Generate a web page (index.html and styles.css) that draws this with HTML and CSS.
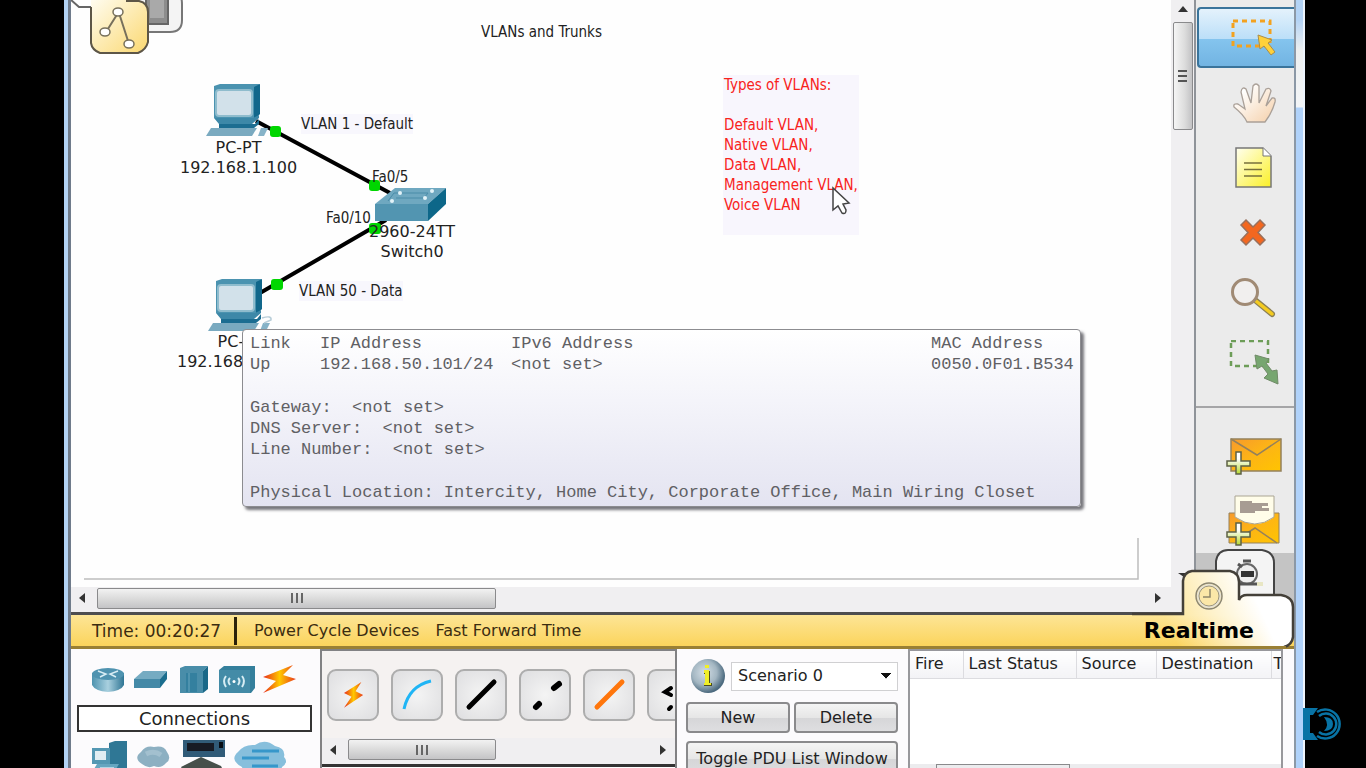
FILE: index.html
```html
<!DOCTYPE html>
<html lang="en">
<head>
<meta charset="utf-8">
<title>VLANs and Trunks</title>
<link rel="stylesheet" href="styles.css">
</head>
<body>
<svg class="defs" width="0" height="0" aria-hidden="true">
  <defs>
    <linearGradient id="gold" x1="0" y1="0" x2="1" y2="1"><stop offset="0" stop-color="#fffdf2"/><stop offset="1" stop-color="#fbd870"/></linearGradient>
    <linearGradient id="steel" x1="0" y1="0" x2="1" y2="0"><stop offset="0" stop-color="#4e93af"/><stop offset=".5" stop-color="#a9d0df"/><stop offset="1" stop-color="#2f7594"/></linearGradient>
    <linearGradient id="fire" x1="0" y1="0" x2="1" y2="0"><stop offset="0" stop-color="#e8281c"/><stop offset=".5" stop-color="#ffc900"/><stop offset="1" stop-color="#e8381c"/></linearGradient>
    <linearGradient id="mail" x1="0" y1="0" x2="1" y2="1"><stop offset="0" stop-color="#f79a2c"/><stop offset=".5" stop-color="#fdb515"/><stop offset="1" stop-color="#ffc400"/></linearGradient>
    <linearGradient id="note" x1="0" y1="0" x2="1" y2="1"><stop offset="0" stop-color="#fffff0"/><stop offset="1" stop-color="#fbf026"/></linearGradient>
    <linearGradient id="skin" x1="0" y1="0" x2="1" y2="1"><stop offset=".2" stop-color="#ffffff"/><stop offset="1" stop-color="#f5cfa8"/></linearGradient>
    <linearGradient id="plus" x1="0" y1="0" x2="0" y2="1"><stop offset=".3" stop-color="#ffffff"/><stop offset="1" stop-color="#b4d92c"/></linearGradient>
    <linearGradient id="tabbase" gradientUnits="userSpaceOnUse" x1="0" y1="614" x2="0" y2="645"><stop offset="0" stop-color="#fde596"/><stop offset="1" stop-color="#fbd45c"/></linearGradient>
    <linearGradient id="tabfill" gradientUnits="userSpaceOnUse" x1="1180" y1="650" x2="1262" y2="612"><stop offset="0" stop-color="#fff" stop-opacity="0"/><stop offset="1" stop-color="#fff"/></linearGradient>
    <radialGradient id="ball" cx=".4" cy=".4" r=".6"><stop offset="0" stop-color="#d5dfe6"/><stop offset=".6" stop-color="#a3b6c2"/><stop offset="1" stop-color="#4c6a7f"/></radialGradient>
    <g id="pc">
      <path d="M8 2 14 0H54L49 4V34H8z" fill="#4b93b0"/>
      <path d="M48 3 54 0V30L48 36z" fill="#11678b"/>
      <rect x="10" y="6" width="36" height="26" rx="3" fill="#d2e1ea" stroke="#8fbccd" stroke-width="2"/>
      <path d="M8 34H47L53 31V34L46 40H13z" fill="#3d88a8"/>
      <path d="M13 40H49L53 35V40L48 44H13z" fill="#1c6d91"/>
      <path d="M5 44H51L46 52H0z" fill="#7aaac0"/>
      <path d="M55 44H62L58 52H52z" fill="#86b3c8"/>
    </g>
    <path id="bolt" d="M30 0 0 12 13 16 0 28 33 14 20 10z" fill="url(#fire)"/>
    <path id="cross" d="M9 0H14V9H23V14H14V22H9V14H0V9H9z" fill="url(#plus)" stroke="#5d6245" stroke-width="1.5"/>
  </defs>
</svg>

<main class="window">
  <section class="workspace">
    <div class="canvas">
      <svg class="diagram" width="1100" height="587" viewBox="71 0 1100 587" aria-hidden="true">
        <path d="M137-6H176Q182-6 182 4V20Q182 32 170 32H140z" fill="#f4f4f4" stroke="#777" stroke-width="2"/>
        <path d="M146-6H168V24H146z" fill="#8d8d8d" stroke="#666" stroke-width="2"/>
        <path d="M150-4H164V18H150z" fill="#a9a9a9"/>
        <path d="M71 0 79 7H92V-4" fill="#fff" stroke="#666" stroke-width="2"/>
        <path d="M91 7V-2H126V1H139Q148 3 148 12V42Q146 50 138 53H100Q92 50 91 43z" fill="url(#gold)"/>
        <path d="M126 1H139Q148 3 148 12V42Q146 50 138 53H100Q92 50 91 43V7" fill="none" stroke="#5d5647" stroke-width="2"/>
        <path d="M118 13 106 32M119 13 129 44" stroke="#77705c" stroke-width="2"/>
        <g fill="#fff" stroke="#77705c" stroke-width="1.5"><ellipse cx="118" cy="12" rx="5" ry="4"/><ellipse cx="105" cy="32" rx="5" ry="4"/><ellipse cx="129" cy="44" rx="5" ry="4"/></g>
        <path d="M84 579H1138V538" fill="none" stroke="#bdbdbd" stroke-width="1.5"/>
        <path d="M256 121 390 193M260 293 386 220" stroke="#000" stroke-width="4"/>
        <g fill="#00d600"><rect x="270" y="126" width="11" height="11" rx="3"/><rect x="369" y="180" width="11" height="11" rx="3"/><rect x="271" y="279" width="12" height="11" rx="3"/><rect x="369" y="223" width="12" height="11" rx="3"/></g>
        <use href="#pc" x="206" y="84"/>
        <use href="#pc" x="208" y="279"/>
        <path d="M262 318Q272 315 271 320L264 323" fill="none" stroke="#b8cdd8" stroke-width="1.5"/>
        <path d="M375 204 395 188H446L428 204z" fill="#6fa8c0"/><path d="M375 204H428V221H375z" fill="#5295b1"/><path d="M428 204 446 188V204L428 221z" fill="#0d6789"/>
        <path d="M388 201 394 193H428L424 198H396" fill="none" stroke="#4a8ca8" stroke-width="1"/>
        <g fill="#e3f3f8"><circle cx="400" cy="193" r="2"/><circle cx="432" cy="191" r="2"/><circle cx="392" cy="201" r="2"/><circle cx="425" cy="198" r="2"/></g>
      </svg>
      <h1 class="tag title">VLANs and Trunks</h1>
      <span class="tag shade vlan1">VLAN 1 - Default</span>
      <span class="tag port5">Fa0/5</span>
      <span class="tag port10">Fa0/10</span>
      <span class="tag shade vlan50">VLAN 50 - Data</span>
      <p class="device pc1">PC-PT<br>192.168.1.100</p>
      <p class="device switch">2960-24TT<br>Switch0</p>
      <p class="device pc2">PC-PT<br>192.168.50.101</p>
      <p class="tag note">Types of VLANs:<br><br>Default VLAN,<br>Native VLAN,<br>Data VLAN,<br>Management VLAN,<br>Voice VLAN<br><br></p>
      <svg class="pointer" width="20" height="30" viewBox="0 0 20 30" aria-hidden="true"><path d="M2 2V24L7 20L11 27Q15 29 15 24L12 18L18 17z" fill="#fff" stroke="#444" stroke-width="1.5"/></svg>
      <div class="tooltip" role="tooltip">
        <table class="links">
          <colgroup><col class="c-link"><col class="c-ip"><col class="c-ip6"><col class="c-mac"></colgroup>
          <tr><th>Link</th><th>IP Address</th><th>IPv6 Address</th><th>MAC Address</th></tr>
          <tr><td>Up</td><td>192.168.50.101/24</td><td>&lt;not set&gt;</td><td>0050.0F01.B534</td></tr>
        </table>
        <p>Gateway:&nbsp; &lt;not set&gt;<br>DNS Server:&nbsp; &lt;not set&gt;<br>Line Number:&nbsp; &lt;not set&gt;</p>
        <p>Physical Location: Intercity, Home City, Corporate Office, Main Wiring Closet</p>
      </div>
    </div>
    <div class="vscroll">
      <svg width="10" height="6" viewBox="0 0 10 6" aria-hidden="true"><path d="M0 6 5 0 10 6z" fill="#333"/></svg>
      <div class="vthumb"><i></i><i></i><i></i></div>
    </div>
    <div class="hscroll">
      <svg width="6" height="10" viewBox="0 0 6 10" aria-hidden="true"><path d="M6 0V10L0 5z" fill="#333"/></svg>
      <div class="hthumb"><i></i><i></i><i></i></div>
      <svg class="end" width="6" height="10" viewBox="0 0 6 10" aria-hidden="true"><path d="M0 0V10L6 5z" fill="#333"/></svg>
    </div>
    <nav class="tools" aria-label="Tools">
      <div class="group">
        <button class="tool active" aria-label="Select"><svg width="54" height="46" viewBox="0 0 54 46"><rect x="6" y="6" width="37" height="25" fill="none" stroke="#f3a21f" stroke-width="3" stroke-dasharray="5 4"/><path d="M31 20 45 25 41 28 48 37 44 40 37 31 33 34z" fill="#ffd13a" stroke="#a98d4c"/></svg></button>
        <button class="tool" aria-label="Move layout"><svg width="54" height="46" viewBox="0 0 54 46"><path d="M21 42Q18 35 8 27Q7 23 12 24L19 29 15 12Q16 6 20 9L25 23 27 6Q30 2 33 6L33 23 40 9Q44 7 45 11L40 26 46 18Q50 17 49 22Q46 33 39 42z" fill="url(#skin)" stroke="#aaa098" stroke-width="1.3"/></svg></button>
        <button class="tool" aria-label="Place note"><svg width="54" height="46" viewBox="0 0 54 46"><path d="M10 3H37L45 11V42H10z" fill="url(#note)" stroke="#777" stroke-width="1.5"/><path d="M37 3V11H45" fill="#fff" stroke="#777"/><path d="M18 18H36M18 24.500H36M18 31H36" stroke="#77703c" stroke-width="1.5"/></svg></button>
        <button class="tool" aria-label="Delete"><svg width="54" height="46" viewBox="0 0 54 46"><path d="M15 15 20 10 27 17 34 10 39 15 32 22.500 39 30 34 35 27 28 20 35 15 30 22 22.500z" fill="#f3671f" stroke="#99705c" stroke-width="1.5"/></svg></button>
        <button class="tool" aria-label="Inspect"><svg width="54" height="46" viewBox="0 0 54 46"><path d="M29 25 46 39" stroke="#8c8055" stroke-width="6" stroke-linecap="round"/><path d="M30 26 46 39" stroke="#f4cb20" stroke-width="3.500" stroke-linecap="round"/><circle cx="19" cy="17" r="12.500" fill="#f1efee" stroke="#a08a74" stroke-width="3"/></svg></button>
        <button class="tool" aria-label="Resize shape"><svg width="54" height="46" viewBox="0 0 54 46"><path d="M5 1H42V26H5z" fill="none" stroke="#6d9d58" stroke-width="2.500" stroke-dasharray="5 4"/><path d="M29 15 43 19 40 23 46 31 51 30 52 44 38 38 42 34 36 26 31 29z" fill="#77a670" stroke="#718b68"/></svg></button>
      </div>
      <div class="group pdu">
        <button class="tool" aria-label="Add simple PDU"><svg width="58" height="46" viewBox="0 0 58 46"><path d="M7 6H57V38H7z" fill="url(#mail)" stroke="#94815c" stroke-width="1.5"/><path d="M7 6 33 22 57 6" fill="none" stroke="#94815c" stroke-width="1.5"/><use href="#cross" x="3" y="19"/></svg></button>
        <button class="tool" aria-label="Add complex PDU"><svg width="58" height="56" viewBox="0 0 58 56"><path d="M5 20H55V50H5z" fill="url(#mail)" stroke="#94815c"/><path d="M11 3H50V24Q31 38 11 24z" fill="#fffde9" stroke="#aaa593"/><path d="M16 8H28V10H44V13H38V15H45V18H31V20H16z" fill="#a79c93"/><path d="M20 42 31 35 53 50" fill="none" stroke="#94815c" stroke-width="1.5"/><use href="#cross" x="3" y="30"/></svg></button>
      </div>
      <div class="rest"></div>
    </nav>
  </section>

  <section class="status">
    <span class="time">Time: 00:20:27</span>
    <button class="plain">Power Cycle Devices</button>
    <button class="plain">Fast Forward Time</button>
    <svg class="modes" width="164" height="102" viewBox="1132 546 164 102" aria-hidden="true">
      <path d="M1216 600V560Q1218 549 1228 549H1262Q1274 551 1274 562V600z" fill="#f4f4f4" stroke="#444" stroke-width="2"/>
      <circle cx="1247" cy="573" r="10" fill="#eee" stroke="#666" stroke-width="2"/><path d="M1241 570H1254V576H1241z" fill="#333"/><path d="M1243 560H1251M1238 563 1242 566M1240 583H1263" stroke="#555" stroke-width="3"/><path d="M1257 581H1263V585H1257z" fill="#e8e6c4"/>
      <path d="M1178 572H1188L1184 576z" fill="#333"/>
      <path id="tab" d="M1132 614H1183V580Q1184 571 1192 570H1230Q1239 572 1239 581V599Q1241 594 1247 594H1281Q1293 596 1293 606V636Q1292 644 1284 647H1132z" fill="url(#tabbase)"/>
      <use href="#tab" fill="none"/>
      <path d="M1132 614H1183V580Q1184 571 1192 570H1230Q1239 572 1239 581V599Q1241 594 1247 594H1281Q1293 596 1293 606V636Q1292 644 1284 647H1132z" fill="url(#tabfill)"/>
      <path d="M1132 613H1183V580Q1184 571 1192 570H1230Q1239 572 1239 581V599Q1241 594 1247 594H1281Q1293 596 1293 606V636Q1292 644 1284 646" fill="none" stroke="#444039" stroke-width="2.500"/>
      <path d="M1132 646.500H1286" stroke="#9a8034" stroke-width="3"/>
      <circle cx="1209" cy="595" r="13" fill="#f7e3a0" stroke="#8c8774" stroke-width="1.500"/><circle cx="1209" cy="595" r="11" fill="#fbe7a8" stroke="#e6e2d4" stroke-width="2"/><circle cx="1209" cy="595" r="10" fill="#fbe7a8" stroke="#9b957e" stroke-width="1"/><path d="M1210 588V596H1203" fill="none" stroke="#8f866a" stroke-width="1.500"/>
    </svg>
    <button class="realtime">Realtime</button>
  </section>

  <section class="dock">
    <div class="devices">
      <div class="icons">
        <button class="kind" aria-label="Routers"><svg width="34" height="30" viewBox="0 0 34 30"><path d="M1 8V20Q4 26 17 27Q30 26 33 20V8z" fill="url(#steel)"/><ellipse cx="17" cy="9" rx="16" ry="6" fill="#4f93b0"/><path d="M7 6 15 9 9 12M27 6 19 9 25 12" fill="none" stroke="#d8edf4" stroke-width="1.500"/></svg></button>
        <button class="kind" aria-label="Switches"><svg width="36" height="30" viewBox="0 0 36 30"><path d="M1 14 10 6H34L27 14z" fill="#75abc2"/><path d="M1 14H27V23H1z" fill="#4489a7"/><path d="M27 14 34 6V14L27 23z" fill="#1b6d8e"/></svg></button>
        <button class="kind hub" aria-label="Hubs"><svg width="28" height="30" viewBox="0 0 28 30"><path d="M0 3 5 1H28L23 6V28H0z" fill="#498da9"/><path d="M23 6 28 1V24L23 28z" fill="#1a6888"/><path d="M6 8H17V27H6z" fill="#34809f"/><path d="M9 8V27" stroke="#6aa7bf"/></svg></button>
        <button class="kind" aria-label="Wireless devices"><svg width="36" height="30" viewBox="0 0 36 30"><path d="M0 5 5 1H36V23L32 28H0z" fill="#347f9c"/><path d="M0 5H31V28H0z" fill="#438ba7"/><g fill="none" stroke="#d7edf4" stroke-width="2"><path d="M7 11Q3 16 7 22M11 13Q8 16 11 20M23 11Q27 16 23 22M19 13Q22 16 19 20"/></g><circle cx="15" cy="16.500" r="1.500" fill="#fff"/></svg></button>
        <button class="kind" aria-label="Connections"><svg width="34" height="30" viewBox="0 0 34 30"><use href="#bolt"/></svg></button>
      </div>
      <div class="current">Connections</div>
      <div class="icons second">
        <button class="kind" aria-label="End devices"><svg width="36" height="34" viewBox="0 0 36 34"><path d="M18 3 24 1H36V34H18z" fill="#2f7795"/><path d="M1 8H19V24H1z" fill="#5498b3"/><path d="M4 11H15V20H4z" fill="#e0edf2"/><path d="M6 24H28L22 34H0z" fill="#66a6c0"/><path d="M9 28H23M7 31H20" stroke="#cbe7f2" stroke-width="1.500"/></svg></button>
        <button class="kind" aria-label="WAN emulation"><svg width="34" height="34" viewBox="0 0 34 34"><path d="M6 24Q-3 18 5 12Q10 5 18 7Q28 5 31 12Q36 19 30 23Q25 29 18 26Q12 29 6 24z" fill="#8db0c2"/><path d="M10 14Q18 10 25 15" fill="none" stroke="#a3c0cf" stroke-width="5"/></svg></button>
        <button class="kind" aria-label="Custom made devices"><svg width="46" height="34" viewBox="0 0 46 34"><path d="M4 0H46V17H4z" fill="#315b78"/><path d="M8 3H35V11H8z" fill="#171b25"/><path d="M40 2H44V8H40z" fill="#080c13"/><path d="M2 27 22 17 42 26 46 34H6z" fill="#47504b"/></svg></button>
        <button class="kind" aria-label="Multiuser connection"><svg width="54" height="34" viewBox="0 0 54 34"><path d="M8 27Q-5 20 4 12Q10 4 21 5Q31-2 41 6Q52 8 50 17Q55 22 48 27L46 34H10z" fill="#87bfdc"/><path d="M18 11H45M8 18H35M18 26H44" stroke="#3797ca" stroke-width="3"/></svg></button>
      </div>
    </div>

    <div class="cables">
      <div class="cable-row">
        <button class="cable" aria-label="Automatic"><svg width="44" height="44" viewBox="0 0 44 44"><use href="#bolt" transform="translate(13 9) scale(.58 .92)"/></svg></button>
        <button class="cable" aria-label="Console"><svg width="44" height="44" viewBox="0 0 44 44"><path d="M9 36Q14 13 36 8" fill="none" stroke="#20b5f5" stroke-width="3"/></svg></button>
        <button class="cable" aria-label="Copper straight-through"><svg width="44" height="44" viewBox="0 0 44 44"><path d="M10 34 35 9" stroke="#000" stroke-width="5" stroke-linecap="round"/></svg></button>
        <button class="cable" aria-label="Copper cross-over"><svg width="44" height="44" viewBox="0 0 44 44"><path d="M13 34 16 31M31 15 36 11" stroke="#000" stroke-width="6" stroke-linecap="round"/></svg></button>
        <button class="cable" aria-label="Fiber"><svg width="44" height="44" viewBox="0 0 44 44"><path d="M10 34 35 9" stroke="#ff760c" stroke-width="5" stroke-linecap="round"/></svg></button>
        <button class="cable" aria-label="Phone"><svg width="44" height="44" viewBox="0 0 44 44"><path d="M20 15 14 19 20 22M18 36 20 34" fill="none" stroke="#000" stroke-width="4" stroke-linecap="round"/></svg></button>
      </div>
      <div class="hscroll small">
        <svg width="6" height="10" viewBox="0 0 6 10" aria-hidden="true"><path d="M6 0V10L0 5z" fill="#333"/></svg>
        <div class="hthumb"><i></i><i></i><i></i></div>
        <svg class="end" width="6" height="10" viewBox="0 0 6 10" aria-hidden="true"><path d="M0 0V10L6 5z" fill="#333"/></svg>
      </div>
      <div class="caption"></div>
    </div>

    <div class="scenario">
      <div class="pick">
        <svg width="36" height="36" viewBox="0 0 36 36" aria-hidden="true"><circle cx="18" cy="18" r="17" fill="url(#ball)"/><path d="M14 13H20V25H22V28H14V25H16V16H14z" fill="#4c4c20"/><path d="M14 12H19V25H21V27H14V25H15V15H14zM15 7H19V10H15z" fill="#f0ef28"/></svg>
        <select class="choice" aria-label="Scenario"><option>Scenario 0</option></select>
      </div>
      <div class="pair"><button class="push">New</button><button class="push">Delete</button></div>
      <button class="push wide">Toggle PDU List Window</button>
    </div>

    <div class="pdus">
      <table class="list">
        <colgroup><col class="w-fire"><col class="w-status"><col class="w-source"><col class="w-dest"><col></colgroup>
        <thead><tr><th>Fire</th><th>Last Status</th><th>Source</th><th>Destination</th><th>T</th></tr></thead>
      </table>
      <div class="listscroll"><div class="listthumb"></div></div>
    </div>
  </section>
</main>
<svg class="mark" width="40" height="32" viewBox="0 0 40 32" aria-hidden="true">
  <path d="M0 0H15L10 7H7V25H10L15 32H0z" fill="#0873a5"/>
  <g fill="none" stroke="#0873a5"><path d="M14 4A14.500 14.500 0 1 1 14 28" stroke-width="2.500"/><path d="M16 8A10.500 10.500 0 1 1 16 24" stroke-width="2.500"/></g>
  <path d="M21 9Q30 9 30 16Q30 23 21 23Q27 17 21 9z" fill="#0873a5"/>
</svg>
</body>
</html>
```
FILE: styles.css
```css
* { box-sizing: border-box; }
body { margin: 0; height: 100vh; padding: 0 61px 0 64px; background: #000; overflow: hidden; position: relative; font: 16px/20px "DejaVu Sans", sans-serif; color: #222; }
p, h1 { margin: 0; }
button { font: inherit; color: inherit; margin: 0; padding: 0; border: 0; background: none; }
svg { display: block; flex: none; }
.defs { position: absolute; }

.window { height: 100%; display: flex; flex-direction: column; border-left: 4px solid #b3d3f5; border-right: 9px solid transparent; box-shadow: inset 3px 0 #6f7b8b, inset -2px 0 #8b98a6; padding: 0 2px 0 3px; background: linear-gradient(90deg, transparent 7px, #eef5fd 7px) right / 9px 100% no-repeat border-box, linear-gradient(#b3d3f5 20px, #eceff0 50px, #f3f5f7 107px, #b0d2fa 108px) right / 9px 100% no-repeat border-box, #fff; }

.workspace { flex: 1; min-height: 0; display: grid; grid-template: minmax(0, 1fr) 25px / minmax(0, 1fr) 23px 100px; }
.canvas { position: relative; overflow: hidden; background: #fefefe; }
.diagram { position: absolute; left: 0; top: 0; }
.tag { position: absolute; font: 15px/20px "DejaVu Sans Condensed", "Noto Sans", sans-serif; white-space: nowrap; }
.shade { background: #f8f7fd; }
.title { left: 410px; top: 22px; }
.vlan1 { left: 230px; top: 114px; }
.port5 { left: 301px; top: 167px; }
.port10 { left: 255px; top: 208px; }
.vlan50 { left: 228px; top: 281px; }
.note { left: 652px; top: 75px; width: 136px; height: 160px; padding-left: 1px; color: #f8231c; background: #f8f6fd; }
.device { position: absolute; text-align: center; white-space: nowrap; }
.pc1 { left: 109px; top: 138px; }
.pc2 { left: 106px; top: 332px; }
.switch { left: 298px; top: 222px; }
.pointer { position: absolute; left: 760px; top: 186px; }

.tooltip { position: absolute; left: 171px; top: 329px; width: 839px; display: flex; flex-direction: column; gap: 22px; padding: 3px 0 3px 7px; border: 1px solid #8c8c90; border-radius: 4px; background: linear-gradient(#fff, #f4f4fa 40%, #e4e4f1); box-shadow: 3px 3px 3px #77777c; color: #606064; font: 17px/21px "Liberation Mono", monospace; white-space: nowrap; }
.links { table-layout: fixed; width: 821px; border-collapse: collapse; }
.links th, .links td { padding: 0; font-weight: normal; text-align: left; }
.c-link { width: 70px; }
.c-ip { width: 191px; }
.c-ip6 { width: 420px; }

.vscroll { display: flex; flex-direction: column; align-items: center; gap: 10px; padding-top: 6px; background: #f0eff1; }
.vthumb { width: 20px; height: 108px; display: flex; flex-direction: column; align-items: center; justify-content: center; gap: 3px; border: 1px solid #8a8a8c; border-radius: 2px; background: linear-gradient(90deg, #f5f5f5, #dcdcdc 60%, #c2c2c4); }
.vthumb i { width: 9px; height: 2px; background: #555; }
.hscroll { grid-row: 2; grid-column: 1 / 3; display: flex; align-items: center; gap: 12px; padding: 0 33px 3px 8px; background: #f0eff1; }
.hthumb { width: 399px; height: 21px; display: flex; align-items: center; justify-content: center; gap: 3px; border: 1px solid #8a8a8c; border-radius: 2px; background: linear-gradient(#f2f2f2, #d9d9d9 55%, #c4c4c6); }
.hthumb i { width: 2px; height: 10px; background: #666; }
.end { margin-left: auto; }

.tools { grid-row: 1 / 3; grid-column: 3; display: flex; flex-direction: column; background: #ebebeb; border-left: 2px solid #8f9399; overflow: hidden; }
.group { flex: none; display: flex; flex-direction: column; gap: 4px; padding: 7px 0 13px 1px; border-bottom: 2px solid #a5a5a7; }
.pdu { padding: 17px 0 2px 1px; border: 0; }
.tool { height: 61px; display: flex; align-items: center; justify-content: center; padding-left: 15px; }
.active { border: 2px solid #3a749b; border-right: 0; border-radius: 4px 0 0 4px; background: linear-gradient(#e4f2fc, #bcdff8 52%, #84c4ee 53%, #72b4e2); }
.rest { flex: 1; background: #c4c4c4; }

.status { position: relative; height: 37px; flex: none; display: flex; align-items: center; padding: 0 40px 0 21px; border-top: 3px solid #4d4d4f; border-bottom: 3px solid #9a8034; background: linear-gradient(#fde596, #fbd45c); color: #3b2c10; }
.time { padding-right: 13px; margin-right: 17px; border-right: 3px solid #2c220a; font-size: 17px; line-height: 28px; }
.plain { margin-right: 16px; line-height: 28px; }
.modes { position: absolute; right: -2px; bottom: -3px; }
.realtime { position: relative; margin-left: auto; font-size: 22px; font-weight: bold; color: #000; }

.dock { height: 119px; flex: none; display: flex; overflow: hidden; background: #fcfbfd; }
.devices { width: 249px; flex: none; padding: 14px 8px 0 6px; }
.icons { display: flex; align-items: center; gap: 8px; height: 34px; padding-left: 14px; }
.hub { margin: 0 3px; }
.current { margin: 8px 0; height: 27px; border: 2px solid #333; text-align: center; font-size: 18px; line-height: 23px; background: #fff; }
.second { gap: 9px; }

.cables { width: 357px; flex: none; border: 2px solid #818183; border-bottom: 0; background: #f5f2f1; overflow: hidden; }
.cable-row { display: flex; gap: 12px; padding: 18px 0 17px 5px; overflow: hidden; }
.cable { width: 52px; height: 52px; flex: none; display: flex; align-items: center; justify-content: center; border: 2px solid #adadad; border-radius: 9px; background: radial-gradient(#f4f4f4, #dedee0); }
.small { height: 26px; padding: 0 9px 3px 8px; }
.small .hthumb { width: 148px; }
.caption { height: 20px; border-top: 3px solid #333; background: #fff; }

.scenario { width: 231px; flex: none; padding: 9px 10px 0 9px; }
.pick { display: flex; align-items: center; gap: 5px; padding-left: 4px; }
.choice { flex: 1; min-width: 0; height: 29px; padding: 0 6px; border: 1px solid #d0d0d2; color: inherit; font: inherit; appearance: none; background: linear-gradient(to bottom left, #111 50%, transparent 51%) right 11px center / 5px 6px no-repeat, linear-gradient(to bottom right, #111 50%, transparent 51%) right 6px center / 5px 6px no-repeat, #fff; }
.pair { display: flex; gap: 4px; margin: 8px 0; }
.push { flex: 1; height: 31px; border: 2px solid #8a8a8c; border-radius: 4px; background: linear-gradient(#f4f4f4, #e6e6e6 50%, #d6d6d8 51%, #dedee0); }
.wide { width: 100%; height: 36px; white-space: nowrap; }

.pdus { flex: 1; min-width: 0; margin: 0 11px 0 0; display: flex; flex-direction: column; justify-content: space-between; border: 2px solid #98989c; border-bottom: 0; background: #fff; overflow: hidden; }
.list { table-layout: fixed; width: 100%; border-collapse: collapse; }
.list th { height: 27px; padding: 0 0 0 5px; font-weight: normal; text-align: left; white-space: nowrap; overflow: hidden; border-right: 1px solid #dcdce0; border-bottom: 1px solid #dcdce0; background: linear-gradient(#fff, #f3f3f6); }
.list th:last-child { padding-left: 2px; border-right: 0; }
.w-fire { width: 53px; }
.w-status { width: 113px; }
.w-source { width: 80px; }
.w-dest { width: 115px; }
.listscroll { height: 4px; padding-left: 26px; background: #ececee; }
.listthumb { width: 134px; height: 4px; border: 1px solid #8a8a8c; border-bottom: 0; }
.mark { position: absolute; right: 23px; bottom: 28px; }
```
